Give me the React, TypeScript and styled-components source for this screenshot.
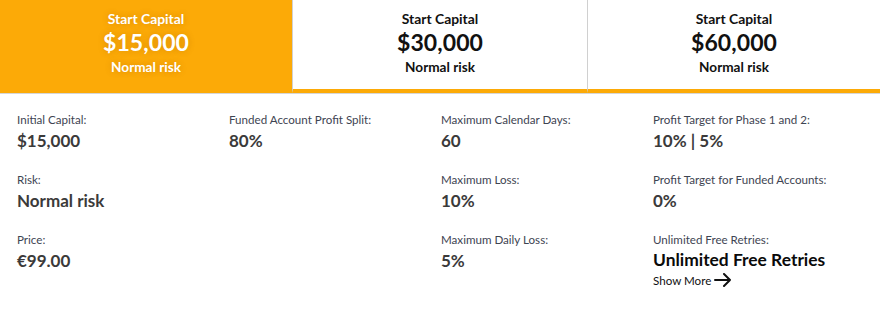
import React from "react";
import styled, { createGlobalStyle } from "styled-components";

const GlobalStyle = createGlobalStyle`
  html, body { margin: 0; padding: 0; background: #fff; }
  body { font-family: Lato, "Open Sans", sans-serif; }
`;

const ORANGE = "#fcaa07";

const Page = styled.div`
  width: 880px;
  background: #fff;
`;

const Tabs = styled.div`
  display: grid;
  grid-template-columns: 292px 295px 293px;
  border-bottom: 1px solid #d6d6d6;
`;

const Tab = styled.div<{ $active?: boolean }>`
  display: flex;
  flex-direction: column;
  align-items: center;
  justify-content: flex-start;
  height: 93px;
  box-sizing: border-box;
  padding-top: 10px;
  background: ${(p) => (p.$active ? ORANGE : "#fff")};
  color: ${(p) => (p.$active ? "#fff" : "#111")};
  border-bottom: 4px solid ${ORANGE};
  border-left: ${(p) => (p.$active ? "none" : "1px solid #d0d0d0")};
  text-shadow: ${(p) => (p.$active ? "0 0 6px rgba(120,60,0,0.25)" : "none")};
  &:first-child { border-left: none; }
`;

const TabTitle = styled.div`
  font-size: 13.9px;
  font-weight: 700;
  line-height: 18px;
`;

const TabAmount = styled.div`
  font-size: 23px;
  font-weight: 700;
  line-height: 28px;
  letter-spacing: 0.1px;
`;

const TabRisk = styled.div`
  font-size: 13.6px;
  font-weight: 700;
  line-height: 18px;
  margin-top: 2px;
`;

const Details = styled.div`
  display: grid;
  grid-template-columns: repeat(4, 212px);
  padding: 19px 0 0 17px;
`;

const Column = styled.div`
  display: flex;
  flex-direction: column;
`;

const Item = styled.div`
  display: flex;
  flex-direction: column;
  height: 60px;
`;

const Label = styled.div`
  font-size: 11.6px;
  line-height: 14px;
  color: #3e4452;
`;

const Value = styled.div<{ $strong?: boolean }>`
  font-size: ${(p) => (p.$strong ? "17.4px" : "17px")};
  font-weight: 700;
  line-height: 20px;
  margin-top: ${(p) => (p.$strong ? "3px" : "4px")};
  color: ${(p) => (p.$strong ? "#0a0a0a" : "#3b3a3a")};
`;

const ShowMore = styled.a`
  display: inline-flex;
  align-items: center;
  gap: 3px;
  margin-top: 3px;
  font-size: 11.6px;
  color: #111;
  text-decoration: none;
  cursor: pointer;
`;

const tabs = [
  { amount: "$15,000", active: true },
  { amount: "$30,000" },
  { amount: "$60,000" },
];

const columns: { label: string; value: string; strong?: boolean; more?: boolean }[][] = [
  [
    { label: "Initial Capital:", value: "$15,000" },
    { label: "Risk:", value: "Normal risk" },
    { label: "Price:", value: "€99.00" },
  ],
  [{ label: "Funded Account Profit Split:", value: "80%" }],
  [
    { label: "Maximum Calendar Days:", value: "60" },
    { label: "Maximum Loss:", value: "10%" },
    { label: "Maximum Daily Loss:", value: "5%" },
  ],
  [
    { label: "Profit Target for Phase 1 and 2:", value: "10% | 5%" },
    { label: "Profit Target for Funded Accounts:", value: "0%" },
    { label: "Unlimited Free Retries:", value: "Unlimited Free Retries", strong: true, more: true },
  ],
];

const Arrow = () => (
  <svg width="18" height="14" viewBox="0 0 18 14" fill="none" stroke="#111" strokeWidth="2" strokeLinecap="round" strokeLinejoin="round">
    <path d="M1 7h15M10 1l6 6-6 6" />
  </svg>
);

export default function App() {
  return (
    <Page>
      <GlobalStyle />
      <Tabs>
        {tabs.map((t) => (
          <Tab key={t.amount} $active={t.active}>
            <TabTitle>Start Capital</TabTitle>
            <TabAmount>{t.amount}</TabAmount>
            <TabRisk>Normal risk</TabRisk>
          </Tab>
        ))}
      </Tabs>
      <Details>
        {columns.map((col, i) => (
          <Column key={i}>
            {col.map((it) => (
              <Item key={it.label}>
                <Label>{it.label}</Label>
                <Value $strong={it.strong}>{it.value}</Value>
                {it.more && (
                  <ShowMore>
                    Show More <Arrow />
                  </ShowMore>
                )}
              </Item>
            ))}
          </Column>
        ))}
      </Details>
    </Page>
  );
}
